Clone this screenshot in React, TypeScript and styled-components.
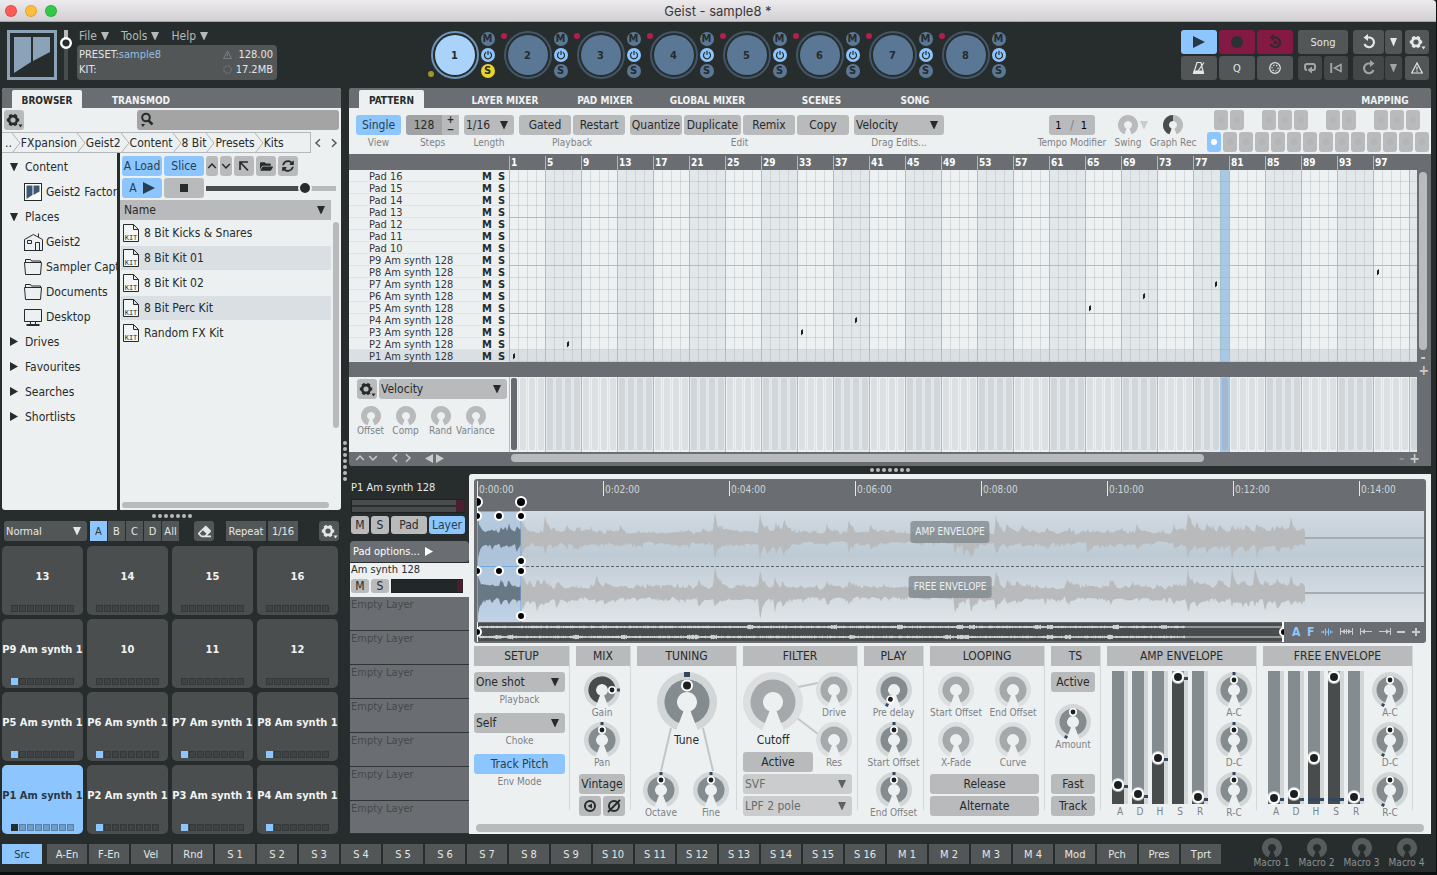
import React from "react";
import styled, { createGlobalStyle, css } from "styled-components";
import { FaEraser, FaFolderOpen, FaSyncAlt } from "react-icons/fa";

const c = {
  shell: "#272d2d",
  strip: "#6a6e72",
  panel: "#edf0f1",
  button: "#b9babb",
  blue: "#8dc6ff",
  darkButton: "#525656",
  ink: "#262b2c",
  muted: "#7c8184",
  maroon: "#841a43",
  ring: "#858c8f",
  tick: "#33485e",
};

const GlobalStyle = createGlobalStyle`
  * { box-sizing: border-box; }
  body { margin: 0; background: #0b0f0f; }
  body, button, input, select {
    font-family: "DejaVu Sans Condensed", "DejaVu Sans", sans-serif;
    font-size: 12px;
    color: ${c.ink};
  }
  button { border: 0; padding: 0; margin: 0; background: none; cursor: pointer; }
  ul { list-style: none; margin: 0; padding: 0; }
  svg { display: block; flex: none; }
`;

/* ---------- window shell ---------- */

const Window = styled.div`
  min-height: 100vh;
  display: flex;
  flex-direction: column;
  background: ${c.shell};
  border-right: 1px solid #0b0f0f;
  border-bottom: 3px solid #0b0f0f;
`;

const TitleBar = styled.header`
  position: relative;
  height: 22px;
  display: flex;
  align-items: center;
  justify-content: center;
  background: linear-gradient(#eceaec, #d2d0d2);
  border-bottom: 1px solid #a9a8a9;
  border-radius: 0 4px 0 0;
  font-family: Inter, Roboto, sans-serif;
  font-size: 13px;
  color: #3a383a;
`;

const Lights = styled.div`
  position: absolute;
  left: 5px;
  display: flex;
  gap: 8px;
`;

const Light = styled.button<{ $color: string }>`
  width: 12px;
  height: 12px;
  border-radius: 50%;
  background: ${(p) => p.$color};
  box-shadow: inset 0 0 0 1px rgba(0, 0, 0, 0.12);
`;

const Header = styled.div`
  height: 66px;
  padding: 8px 7px 0;
  display: grid;
  grid-template-columns: 1fr auto 1fr;
  align-items: start;
`;

const Brand = styled.div`
  display: flex;
`;

const MasterFader = styled.div`
  width: 18px;
  display: flex;
  justify-content: center;
`;

const MenuArea = styled.div`
  margin-left: 2px;
`;

const MenuRow = styled.nav`
  display: flex;
  gap: 12px;
  height: 15px;
  padding-left: 2px;
`;

const MenuButton = styled.button`
  display: flex;
  align-items: center;
  gap: 4px;
  height: 12px;
  color: #b5b9b9;
`;

const InfoBox = styled.div`
  width: 200px;
  height: 35px;
  padding: 2px 4px 2px 2px;
  border-radius: 4px;
  background: ${c.darkButton};
  color: #e2e5e5;
  font-size: 11px;
  display: grid;
  grid-template-columns: 1fr 10px 40px;
  grid-auto-rows: 15px;
  align-items: center;
  line-height: 15px;
  b {
    font-weight: normal;
    color: #92bfe6;
  }
  span:nth-child(3n) {
    text-align: right;
  }
`;

const Engines = styled.div`
  display: flex;
  gap: 9px;
`;

const Engine = styled.div`
  position: relative;
  display: flex;
  align-items: center;
  gap: 2px;
  height: 50px;
`;

const EngineRing = styled.button<{ $on?: boolean }>`
  width: 48px;
  height: 48px;
  border-radius: 50%;
  border: 2px solid ${(p) => (p.$on ? "#6c93ba" : "#42566a")};
  padding: 2px;
  background: ${(p) => (p.$on ? "#a9d3fb" : "#5a7896")} content-box;
  font-weight: bold;
  font-size: 11px;
  color: ${c.ink};
`;

const EngineDot = styled.span<{ $low?: boolean }>`
  position: absolute;
  left: -3px;
  top: ${(p) => (p.$low ? "41px" : "3px")};
  width: 6px;
  height: 6px;
  border-radius: 50%;
  background: ${(p) => (p.$low ? "#a39427" : "#b31d4f")};
`;

const EngineSide = styled.div`
  display: flex;
  flex-direction: column;
  gap: 2px;
`;

const MiniRound = styled.button<{ $tone: string }>`
  width: 14px;
  height: 14px;
  border-radius: 50%;
  background: ${(p) => p.$tone};
  font-weight: bold;
  font-size: 11px;
  line-height: 14px;
  display: flex;
  align-items: center;
  justify-content: center;
`;

const Transport = styled.div`
  justify-self: end;
  display: flex;
  flex-direction: column;
  gap: 2px;
`;

const TransportRow = styled.div`
  display: flex;
  gap: 5px;
`;

const Cluster = styled.div<{ $gap?: number; $pull?: boolean }>`
  display: flex;
  gap: ${(p) => p.$gap ?? 2}px;
  ${(p) => p.$pull && "margin-left: -2px;"}
`;

const DarkButton = styled.button<{ $w: number; $h?: number; $tone?: string; $dim?: boolean; $square?: boolean }>`
  width: ${(p) => p.$w}px;
  height: ${(p) => p.$h ?? 20}px;
  border-radius: ${(p) => (p.$square ? 0 : 3)}px;
  background: ${(p) => p.$tone ?? (p.$dim ? "#434747" : c.darkButton)};
  color: ${(p) => (p.$tone === c.blue ? "#263847" : p.$tone ? "#3b2431" : p.$dim ? "#a2a5a5" : "#e4e7e7")};
  font-size: 11px;
  display: flex;
  align-items: center;
  justify-content: center;
  white-space: nowrap;
`;

const Body = styled.main`
  flex: 1;
  display: flex;
  padding: 0 5px 0 2px;
`;

const LeftColumn = styled.div`
  flex: 0 0 339px;
  min-width: 0;
  display: flex;
  flex-direction: column;
`;

const RightColumn = styled.div`
  flex: 1;
  min-width: 0;
  display: flex;
  flex-direction: column;
`;

const Grip = styled.div<{ $vertical?: boolean; $size: number }>`
  flex: 0 0 ${(p) => p.$size}px;
  display: flex;
  flex-direction: ${(p) => (p.$vertical ? "column" : "row")};
  align-items: center;
  justify-content: center;
  gap: 2px;
  i {
    width: 4px;
    height: 4px;
    border-radius: 50%;
    background: #b9babb;
  }
`;

/* ---------- shared controls ---------- */

const TabStrip = styled.div`
  height: 20px;
  display: flex;
  align-items: flex-end;
  background: ${c.strip};
  border-radius: 3px 3px 0 0;
`;

const Tab = styled.button<{ $w: number; $active?: boolean; $end?: boolean }>`
  flex: none;
  width: ${(p) => p.$w}px;
  height: 18px;
  padding-top: 2px;
  border-radius: 2px 2px 0 0;
  background: ${(p) => (p.$active ? c.panel : "transparent")};
  color: ${(p) => (p.$active ? c.ink : "#f0f2f3")};
  font-weight: bold;
  font-size: 10px;
  white-space: nowrap;
  ${(p) => p.$end && "margin-left: auto;"}
`;

const LightButton = styled.button<{ $w?: number; $h?: number; $on?: boolean }>`
  flex: none;
  width: ${(p) => (p.$w ? p.$w + "px" : "100%")};
  height: ${(p) => p.$h ?? 20}px;
  border-radius: 3px;
  background: ${(p) => (p.$on ? c.blue : c.button)};
  color: ${(p) => (p.$on ? "#26404f" : c.ink)};
  display: flex;
  align-items: center;
  justify-content: center;
  gap: 6px;
  white-space: nowrap;
`;

const SelectBox = styled.div<{ $w?: number; $dim?: boolean; $dark?: boolean }>`
  position: relative;
  flex: none;
  width: ${(p) => (p.$w ? p.$w + "px" : "100%")};
  height: 20px;
  select {
    appearance: none;
    width: 100%;
    height: 20px;
    border: 0;
    border-radius: 3px;
    padding: 0 14px 0 2px;
    background: ${(p) => (p.$dark ? c.darkButton : p.$dim ? "#cbcccd" : c.button)};
    color: ${(p) => (p.$dark ? "#e4e7e7" : p.$dim ? "#676c6e" : c.ink)};
    font-size: ${(p) => (p.$dark ? 11 : 12)}px;
  }
  svg {
    position: absolute;
    right: 6px;
    top: 6px;
    pointer-events: none;
    color: ${(p) => (p.$dark ? "#e4e7e7" : p.$dim ? "#5c6163" : c.ink)};
  }
`;

function Down({ size = 8 }: { size?: number }) {
  return (
    <svg width={size} height={8} viewBox="0 0 8 8" preserveAspectRatio="none" aria-hidden="true">
      <path d="M0 0h8L4.300 8h-.6z" fill="currentColor" />
    </svg>
  );
}

function Picker(p: { label: string; value: string; w?: number; dim?: boolean; dark?: boolean }) {
  return (
    <SelectBox $w={p.w} $dim={p.dim} $dark={p.dark}>
      <select aria-label={p.label} defaultValue={p.value}>
        <option>{p.value}</option>
      </select>
      <Down />
    </SelectBox>
  );
}

const ScrollThumb = styled.div<{ $w?: string; $h?: string }>`
  width: ${(p) => p.$w ?? "6px"};
  height: ${(p) => p.$h ?? "6px"};
  border-radius: 4px;
  background: ${c.button};
`;

function Gear({ size = 20 }: { size?: number }) {
  return (
    <svg width={size} height={size} viewBox="0 0 20 20" aria-hidden="true">
      <g stroke="currentColor" fill="none">
        <circle cx="9" cy="10" r="3.900" strokeWidth="2.600" />
        {[0, 60, 120].map((a) => (
          <g key={a} transform={`rotate(${a} 9 10)`} strokeWidth="3.200">
            <path d="M2.800 10h2M13.200 10h2" />
          </g>
        ))}
      </g>
      <path d="M14.500 14.500h4l-2 3z" fill="currentColor" />
    </svg>
  );
}

/* ---------- rotary knob ---------- */

const rad = (deg: number) => ((deg - 90) * Math.PI) / 180;
const px = (r: number, deg: number) => `${(r * Math.cos(rad(deg))).toFixed(2)} ${(r * Math.sin(rad(deg))).toFixed(2)}`;

function sector(from: number, to: number, outer: number, inner: number) {
  const big = to - from > 180 ? 1 : 0;
  return `M${px(outer, from)}A${outer} ${outer} 0 ${big} 1 ${px(outer, to)}L${px(inner, to)}A${inner} ${inner} 0 ${big} 0 ${px(inner, from)}Z`;
}

const KnobLabel = styled.label`
  position: relative;
  display: flex;
  flex-direction: column;
  align-items: center;
  input {
    position: absolute;
    inset: 0;
    width: 100%;
    height: 100%;
    margin: 0;
    opacity: 0;
  }
`;

const KnobText = styled.span<{ $big?: boolean; $pull: number; $dark?: boolean }>`
  margin-top: ${(p) => -p.$pull}px;
  height: ${(p) => (p.$big ? 16 : 14)}px;
  line-height: ${(p) => (p.$big ? 16 : 14)}px;
  font-size: ${(p) => (p.$big ? 12 : 10)}px;
  color: ${(p) => (p.$big ? c.ink : p.$dark ? "#8d9292" : c.muted)};
  white-space: nowrap;
`;

type KnobProps = {
  label: string;
  kind?: "small" | "big" | "tiny";
  dot?: number;
  tick?: number;
  fill?: number;
  off?: boolean;
  dark?: boolean;
  roomy?: boolean;
};

function Knob({ label, kind = "small", dot, tick, fill, off, dark, roomy }: KnobProps) {
  const big = kind === "big";
  const tiny = kind === "tiny";
  const half = big ? 30 : tiny ? 10 : 18;
  const outer = big ? 22.5 : tiny ? 10 : 13.5;
  const inner = big ? 10 : tiny ? 4 : 6;
  const ring = dark ? "#565b5b" : tiny ? "#b9babb" : off ? "#a5a9ac" : c.ring;
  return (
    <KnobLabel>
      <svg width={half * 2} height={half * 2} viewBox={`${-half} ${-half} ${half * 2} ${half * 2}`} aria-hidden="true">
        {!tiny && <path d={sector(-159, 159, half, inner)} fill={off ? "#dcdee0" : "#d2d6d7"} />}
        <path d={sector(-159, 159, outer, inner)} fill={ring} />
        {fill !== undefined && <path d={sector(-159, fill, outer, inner)} fill="#484c4d" />}
        {tick !== undefined && (
          <rect x={big ? -3 : -1.5} y={-half} width={big ? 6 : 3} height={big ? 5 : 3} fill={c.tick} transform={`rotate(${tick})`} />
        )}
        {dot !== undefined && (
          <g transform={`rotate(${dot})`}>
            <circle cy={big ? -16.5 : -10} r={big ? 6 : 4} fill="#fff" />
            <circle cy={big ? -16.5 : -10} r={big ? 4 : 2.4} fill="#1b1f20" />
          </g>
        )}
      </svg>
      <input type="range" aria-label={label} />
      <KnobText $big={big} $pull={roomy ? -1 : big ? 0 : 2} $dark={dark}>
        {label}
      </KnobText>
    </KnobLabel>
  );
}

/* ---------- browser ---------- */

const BrowserPanel = styled.section`
  flex: 1;
  display: flex;
  flex-direction: column;
  background: ${c.panel};
  border-radius: 3px;
`;

const BrowserTabs = styled(TabStrip)`
  padding-left: 10px;
`;

const SearchRow = styled.div`
  height: 24px;
  padding: 2px;
  display: flex;
  justify-content: space-between;
`;

const SearchField = styled.label`
  position: relative;
  width: 202px;
  svg {
    position: absolute;
    left: 2px;
    top: 2px;
  }
  input {
    width: 100%;
    height: 20px;
    border: 0;
    border-radius: 3px;
    padding: 0 4px 0 22px;
    background: #a4a4a5;
  }
`;

const CrumbRow = styled.div`
  display: flex;
  height: 21px;
`;

const Crumbs = styled.nav`
  width: 309px;
  overflow: hidden;
  border: 1px solid #b5b8ba;
  border-left: 0;
  display: flex;
  align-items: center;
  padding-left: 3px;
  button {
    white-space: nowrap;
  }
`;

const Pager = styled.div`
  flex: 1;
  display: flex;
  align-items: center;
  justify-content: center;
  gap: 6px;
  color: #55595b;
`;

const BrowserSplit = styled.div`
  flex: 1;
  display: grid;
  grid-template-columns: 115px 3px 1fr;
`;

const TreePane = styled.ul`
  overflow: hidden;
  padding-top: 1px;
`;

const TreeRow = styled.li<{ $child?: boolean }>`
  height: 25px;
  display: flex;
  align-items: center;
  gap: ${(p) => (p.$child ? 3 : 7)}px;
  padding-left: ${(p) => (p.$child ? 21 : 8)}px;
  white-space: nowrap;
`;

const Divider = styled.div`
  background: ${c.shell};
`;

const ListPane = styled.div`
  display: flex;
  flex-direction: column;
  min-width: 0;
`;

const ButtonLine = styled.div`
  display: flex;
  align-items: center;
  gap: 2px;
  padding: 2px 2px 0;
  &:first-child {
    padding-top: 3px;
  }
`;

const PreviewRange = styled.input`
  appearance: none;
  width: 130px;
  height: 12px;
  margin: 0;
  background: linear-gradient(90deg, #484c4d 76%, #b9babb 76%) center / 100% 5px no-repeat;
  &::-webkit-slider-thumb {
    appearance: none;
    width: 14px;
    height: 14px;
    border-radius: 50%;
    background: ${c.ink};
    border: 2px solid ${c.panel};
  }
`;

const FileArea = styled.div`
  flex: 1;
  display: grid;
  grid-template-columns: 211px 10px;
  padding-top: 2px;
`;

const NameHeader = styled.button`
  width: 100%;
  height: 20px;
  padding: 0 6px 0 4px;
  background: ${c.button};
  display: flex;
  align-items: center;
  justify-content: space-between;
`;

const FileRow = styled.li<{ $alt?: boolean }>`
  height: 24px;
  margin: 1px 0 0 1px;
  padding-left: 2px;
  display: flex;
  align-items: center;
  gap: 5px;
  background: ${(p) => (p.$alt ? "#dadfe4" : "transparent")};
`;

const VerticalGutter = styled.div`
  padding: 22px 0 0 2px;
`;

const HorizontalGutter = styled.div`
  height: 8px;
  padding-left: 2px;
`;

function Chevron({ dir }: { dir: "up" | "down" | "left" | "right" }) {
  const turn = { up: 0, right: 90, down: 180, left: 270 }[dir];
  return (
    <svg width="10" height="10" viewBox="-5 -5 10 10" aria-hidden="true">
      <path d="M-3.800 2L0 -2L3.800 2" transform={`rotate(${turn})`} fill="none" stroke="currentColor" strokeWidth="1.500" />
    </svg>
  );
}

function Triangle({ dir, w = 8, h = 9 }: { dir: "left" | "right"; w?: number; h?: number }) {
  return (
    <svg width={w} height={h} viewBox="0 0 10 10" preserveAspectRatio="none" aria-hidden="true">
      <path d={dir === "right" ? "M0 0L10 5L0 10z" : "M10 0L0 5L10 10z"} fill="currentColor" />
    </svg>
  );
}

function PlaceIcon({ kind }: { kind: string }) {
  return (
    <svg width="20" height="20" viewBox="0 0 20 20" fill="none" stroke="#262b2c" strokeWidth="1" aria-hidden="true">
      {kind === "library" && (
        <>
          <rect x="1.500" y="1.500" width="17" height="17" fill="#fff" />
          <path d="M3.500 3.500h6v9.500l-6 4zM10.500 3.500h6v6l-6 3.500z" fill="#3f5872" stroke="none" />
        </>
      )}
      {kind === "home" && (
        <path d="M1.500 19V7.500L10.500 2.500L19.500 7.500V18.500H1.500M15.500 5V1.500M4.500 8.500h4v3h-4zM12.500 18.500v-8h4v8" />
      )}
      {kind === "folder" && <path d="M2.500 17.500L1.500 5.500h17L17.500 17.500zM2.500 5.500V2.500h5l1 1.500h9v1.500" />}
      {kind === "desktop" && (
        <>
          <path d="M1.500 2.500h17v12h-17zM7.500 14.500v3M12.500 14.500v3" />
          <path d="M3.500 18h13" strokeWidth="2" />
        </>
      )}
    </svg>
  );
}

function KitIcon() {
  return (
    <svg width="16" height="18" viewBox="0 0 16 18" aria-hidden="true">
      <path d="M.5 .5h10l5 5v12h-15zM10.500 .5v5h5" fill="#f4f6f6" stroke="#262b2c" />
      <text x="8" y="16" textAnchor="middle" fontSize="7" fontFamily="Liberation Mono, monospace" fill="#262b2c">
        KIT
      </text>
    </svg>
  );
}

const tree: { label: string; icon?: string; open?: boolean }[] = [
  { label: "Content", open: true },
  { label: "Geist2 Factory", icon: "library" },
  { label: "Places", open: true },
  { label: "Geist2", icon: "home" },
  { label: "Sampler Captures", icon: "folder" },
  { label: "Documents", icon: "folder" },
  { label: "Desktop", icon: "desktop" },
  { label: "Drives" },
  { label: "Favourites" },
  { label: "Searches" },
  { label: "Shortlists" },
];

function Browser() {
  return (
    <BrowserPanel>
      <BrowserTabs>
        <Tab $w={70} $active>BROWSER</Tab>
        <Tab $w={118}>TRANSMOD</Tab>
      </BrowserTabs>
      <SearchRow>
        <LightButton $w={20} aria-label="Browser options"><Gear /></LightButton>
        <SearchField>
          <svg width="16" height="16" viewBox="0 0 16 16" fill="none" stroke={c.ink} aria-hidden="true">
            <circle cx="7" cy="5.500" r="3.800" strokeWidth="2" />
            <path d="M9.500 8.500L13.500 12.500" strokeWidth="2.500" />
            <path d="M2 12h4l-2 3z" fill={c.ink} stroke="none" />
          </svg>
          <input aria-label="Search" />
        </SearchField>
      </SearchRow>
      <CrumbRow>
        <Crumbs>
          {["..", "FXpansion", "Geist2", "Content", "8 Bit", "Presets", "Kits"].map((t, i) => (
            <React.Fragment key={t}>
              {i > 0 && (
                <svg width="9" height="20" viewBox="0 0 9 20" aria-hidden="true">
                  <path d="M0 0L8 10L0 20" fill="none" stroke="#b0b3b5" />
                </svg>
              )}
              <button>{t}</button>
            </React.Fragment>
          ))}
        </Crumbs>
        <Pager><Chevron dir="left" /><Chevron dir="right" /></Pager>
      </CrumbRow>
      <BrowserSplit>
        <TreePane>
          {tree.map((n) => (
            <TreeRow key={n.label} $child={!!n.icon}>
              {n.icon ? <PlaceIcon kind={n.icon} /> : n.open ? <Down /> : <Triangle dir="right" />}
              {n.label}
            </TreeRow>
          ))}
        </TreePane>
        <Divider />
        <ListPane>
          <ButtonLine>
            <LightButton $w={40} $on>A Load</LightButton>
            <LightButton $w={40} $on>Slice</LightButton>
            <LightButton $w={12} aria-label="Previous"><Chevron dir="up" /></LightButton>
            <LightButton $w={12} aria-label="Next"><Chevron dir="down" /></LightButton>
            <LightButton $w={20} aria-label="Parent folder">
              <svg width="12" height="12" viewBox="0 0 12 12" fill="none" stroke={c.ink} strokeWidth="1.700" aria-hidden="true">
                <path d="M2 10V2H10M2 2L10 10.500" />
              </svg>
            </LightButton>
            <LightButton $w={20} aria-label="Open folder"><FaFolderOpen size={13} /></LightButton>
            <LightButton $w={20} aria-label="Refresh"><FaSyncAlt size={12} /></LightButton>
          </ButtonLine>
          <ButtonLine>
            <LightButton $w={40} $on>A <Triangle dir="right" w={12} h={12} /></LightButton>
            <LightButton $w={40} aria-label="Stop">
              <svg width="8" height="8" aria-hidden="true"><rect width="8" height="8" fill={c.ink} /></svg>
            </LightButton>
            <PreviewRange type="range" defaultValue={79} aria-label="Preview volume" />
          </ButtonLine>
          <FileArea>
            <div>
              <NameHeader>Name <Down /></NameHeader>
              <ul>
                {["8 Bit Kicks & Snares", "8 Bit Kit 01", "8 Bit Kit 02", "8 Bit Perc Kit", "Random FX Kit"].map((f, i) => (
                  <FileRow key={f} $alt={i % 2 === 1}><KitIcon />{f}</FileRow>
                ))}
              </ul>
            </div>
            <VerticalGutter><ScrollThumb $h="206px" /></VerticalGutter>
          </FileArea>
          <HorizontalGutter><ScrollThumb $w="207px" /></HorizontalGutter>
        </ListPane>
      </BrowserSplit>
    </BrowserPanel>
  );
}

/* ---------- pads ---------- */

const PadToolbar = styled.div`
  display: flex;
  gap: 3px;
  padding: 0 2px;
  margin-bottom: 5px;
`;

const Push = styled.span<{ $w: number }>`
  flex: 0 0 ${(p) => p.$w}px;
`;

const PadGrid = styled.div`
  display: grid;
  grid-template-columns: repeat(4, 81px);
  grid-auto-rows: 69px;
  gap: 4px;
`;

const Pad = styled.button<{ $on?: boolean }>`
  overflow: hidden;
  border-radius: 5px;
  background: ${(p) => (p.$on ? c.blue : "#4a4e4e")};
  color: ${(p) => (p.$on ? "#263847" : "#f1f3f3")};
  font-weight: bold;
  font-size: 11px;
  display: flex;
  flex-direction: column;
  justify-content: flex-end;
  align-items: center;
  gap: 20px;
  padding: 0 0 3px;
  white-space: nowrap;
`;

const Leds = styled.span<{ $on?: boolean; $used?: boolean }>`
  display: flex;
  gap: 1px;
  i {
    width: 7px;
    height: 7px;
    border: 1px solid ${(p) => (p.$on ? "#5a80a6" : "#343838")};
    background: ${(p) => (p.$on ? "#6f9cc8" : "#3f4343")};
  }
  i:first-child {
    ${(p) =>
      p.$used &&
      css`
        border-color: ${p.$on ? c.ink : c.blue};
        background: ${p.$on ? c.ink : c.blue};
      `}
  }
`;

const PadText = styled.span`
  line-height: 16px;
`;

const padNames = [
  "13", "14", "15", "16",
  "P9 Am synth 1", "10", "11", "12",
  "P5 Am synth 1", "P6 Am synth 1", "P7 Am synth 1", "P8 Am synth 1",
  "P1 Am synth 1", "P2 Am synth 1", "P3 Am synth 1", "P4 Am synth 1",
];

function Pads() {
  return (
    <>
      <PadToolbar>
        <Picker label="Pad mode" value="Normal" w={83} dark />
        <Cluster $gap={1}>
          {["A", "B", "C", "D", "All"].map((b, i) => (
            <DarkButton key={b} $w={17} $square $tone={i === 0 ? c.blue : undefined}>{b}</DarkButton>
          ))}
        </Cluster>
        <Push $w={9} />
        <DarkButton $w={20} aria-label="Erase"><FaEraser size={13} /></DarkButton>
        <Push $w={6} />
        <Cluster>
          <DarkButton $w={40} $square>Repeat</DarkButton>
          <DarkButton $w={30} $square>1/16</DarkButton>
        </Cluster>
        <Push $w={15} />
        <DarkButton $w={20} aria-label="Pad options"><Gear /></DarkButton>
      </PadToolbar>
      <PadGrid>
        {padNames.map((n) => {
          const on = n.startsWith("P1 ");
          return (
            <Pad key={n} $on={on}>
              <PadText>{n}</PadText>
              <Leds $on={on} $used={n.startsWith("P")}>
                {Array.from({ length: 8 }, (_, i) => <i key={i} />)}
              </Leds>
            </Pad>
          );
        })}
      </PadGrid>
    </>
  );
}

/* ---------- pattern ---------- */

const PatternPanel = styled.section`
  background: ${c.strip};
  border-radius: 3px 3px 0 3px;
`;

const PatternTabs = styled(TabStrip)`
  padding: 0 21px 0 10px;
`;

const PatternTools = styled.div`
  height: 46px;
  display: flex;
  padding: 7px 2px 0 7px;
  gap: 5px;
  background: ${c.panel};
`;

const ToolGroup = styled.div<{ $w?: number; $end?: boolean }>`
  position: relative;
  flex: none;
  width: ${(p) => (p.$w ? p.$w + "px" : "auto")};
  display: flex;
  flex-direction: column;
  align-items: center;
  ${(p) => p.$end && "margin-left: auto;"}
`;

const Caption = styled.span`
  font-size: 10px;
  line-height: 16px;
  color: ${c.muted};
  white-space: nowrap;
`;

const StepsField = styled.div`
  display: flex;
  input {
    width: 36px;
    height: 20px;
    border: 0;
    border-radius: 3px 0 0 3px;
    background: #a0a2a3;
    text-align: center;
  }
`;

const Spinner = styled.div`
  width: 17px;
  display: flex;
  flex-direction: column;
  background: ${c.button};
  button {
    height: 10px;
    line-height: 10px;
    font-size: 10px;
    font-weight: bold;
  }
`;

const TempoField = styled.div`
  width: 46px;
  height: 20px;
  border-radius: 3px;
  background: ${c.button};
  display: flex;
  align-items: center;
  justify-content: center;
  gap: 7px;
  color: ${c.muted};
  input {
    width: 8px;
    border: 0;
    padding: 0;
    background: none;
    font-size: 11px;
    color: #000;
  }
`;

const SwingArrow = styled.span`
  position: absolute;
  right: -3px;
  top: 6px;
  color: #c9cbcc;
`;

const Keyboard = styled.div`
  margin: -5px 0 0 6px;
  display: flex;
  flex-direction: column;
  gap: 2px;
`;

const KeyRow = styled.div<{ $black?: boolean }>`
  display: flex;
  gap: 2px;
  padding-left: ${(p) => (p.$black ? 7 : 0)}px;
`;

const PianoKey = styled.button<{ $on?: boolean; $skip?: boolean }>`
  width: 14px;
  height: 20px;
  border-radius: 3px;
  background: ${(p) => (p.$on ? c.blue : c.button)};
  display: flex;
  align-items: center;
  justify-content: center;
  ${(p) => p.$skip && "margin-left: 16px;"}
  &::after {
    content: "";
    width: 6px;
    height: 6px;
    border-radius: 50%;
    background: ${(p) => (p.$on ? "#fff" : "#b3b4b5")};
  }
`;

const Ruler = styled.div`
  height: 16px;
  display: flex;
  padding-left: 160px;
  overflow: hidden;
`;

const RulerMark = styled.span`
  flex: 0 0 36px;
  height: 14px;
  margin-top: 2px;
  padding-left: 1px;
  border-left: 1px solid #b5b8ba;
  color: #fff;
  font-weight: bold;
  font-size: 10px;
  line-height: 14px;
`;

const GridRow = styled.div`
  display: grid;
  grid-template-columns: 160px 1fr 14px;
`;

const TrackNames = styled.ul`
  background: ${c.panel};
`;

const TrackRow = styled.li<{ $sel?: boolean }>`
  height: 12px;
  display: grid;
  grid-template-columns: 111px 14px 15px;
  grid-template-rows: 14px;
  padding-left: 20px;
  font-size: 11px;
  line-height: 14px;
  white-space: nowrap;
  color: #33383a;
  background: ${(p) => (p.$sel ? "#dadfe3" : "transparent")};
  box-shadow: inset 0 -1px #dfe3e5;
  button {
    font-size: 11px;
    line-height: 14px;
    font-weight: bold;
  }
`;

const Canvas = styled.svg`
  width: 100%;
  min-width: 0;
`;

const GridScroll = styled.div`
  display: flex;
  flex-direction: column;
  align-items: center;
  padding: 2px 2px 0 0;
  gap: 3px;
`;

const ZoomKey = styled.button<{ $dim?: boolean }>`
  height: 9px;
  font-size: 14px;
  font-weight: bold;
  line-height: 9px;
  color: ${(p) => (p.$dim ? "#8b8f92" : "#c9cbcc")};
`;

const GapRow = styled.div`
  height: 15px;
  display: flex;
  justify-content: flex-end;
  padding: 4px 2px 0 0;
`;

const VelocityControls = styled.div`
  height: 75px;
  background: ${c.panel};
  padding: 2px 2px 0 8px;
`;

const VelocityTop = styled.div`
  display: flex;
  gap: 2px;
  margin-bottom: 7px;
`;

const VelocityKnobs = styled.div`
  display: grid;
  grid-template-columns: repeat(4, 35px);
  margin-left: -4px;
`;

const PatternFooter = styled.div`
  height: 14px;
  display: grid;
  grid-template-columns: 162px 1fr 32px;
  color: #c9cbcc;
`;

const FooterNav = styled.div`
  display: flex;
  align-items: center;
  height: 12px;
  padding-left: 6px;
  gap: 3px;
`;

const FooterScroll = styled.div`
  padding-top: 2px;
`;

const FooterZoom = styled.div`
  display: flex;
  gap: 5px;
  align-items: center;
  height: 12px;
`;

const notes = [
  [0, 15], [6, 14], [32, 13], [38, 12], [64, 11], [70, 10], [78, 9], [96, 8],
];

const trackNames = [
  ...[16, 15, 14, 13, 12, 11, 10].map((n) => `Pad ${n}`),
  ...[9, 8, 7, 6, 5, 4, 3, 2, 1].map((n) => `P${n} Am synth 128`),
];

function NoteGrid() {
  return (
    <Canvas height={192} shapeRendering="crispEdges" role="img" aria-label="Pattern grid">
      <defs>
        <pattern id="groups" width="72" height="192" patternUnits="userSpaceOnUse">
          <rect width="72" height="192" fill="#edf1f1" />
          <rect x="36" width="36" height="192" fill="#e2e7ea" />
          <rect y="180" width="72" height="12" fill="#dadfe3" />
        </pattern>
        <pattern id="cells" width="9" height="12" patternUnits="userSpaceOnUse">
          <rect width="1" height="12" fill="#9aa2a6" opacity=".3" />
          <rect y="11" width="9" height="1" fill="#9aa2a6" opacity=".3" />
        </pattern>
        <pattern id="beats" width="36" height="48" patternUnits="userSpaceOnUse">
          <rect width="1" height="48" fill="#b6babc" />
          <rect y="47" width="36" height="1" fill="#b6babc" />
        </pattern>
      </defs>
      <rect width="100%" height="192" fill="url(#groups)" />
      <rect x="711" width="9" height="192" fill="#a9c8e2" />
      <rect width="100%" height="192" fill="url(#cells)" />
      <rect width="100%" height="191" fill="url(#beats)" />
      <g shapeRendering="auto" fill="#1b1f20">
        {notes.map(([s, r]) => (
          <path key={s} d="M4 4.500L6 3V7.500L4 9.500z" transform={`translate(${s * 9} ${r * 12})`} />
        ))}
      </g>
    </Canvas>
  );
}

function VelocityGraph() {
  return (
    <Canvas height={75} role="img" aria-label="Velocity graph">
      <defs>
        <pattern id="lanes" width="72" height="75" patternUnits="userSpaceOnUse">
          <rect width="72" height="75" fill="#edf1f1" />
          <rect x="36" width="36" height="75" fill="#e2e7ea" />
          {Array.from({ length: 8 }, (_, i) => (
            <g key={i}>
              <rect x={i * 9} width="1" height="75" fill={i % 4 ? "#dfe3e5" : "#b6babc"} />
              <rect x={i * 9 + 2} y="1" width="6" height="72" rx="2" fill={i < 4 ? "#dbdfe2" : "#d1d6da"} />
            </g>
          ))}
        </pattern>
      </defs>
      <rect width="100%" height="75" fill="url(#lanes)" />
      <rect x="2" y="1" width="6" height="72" rx="2" fill="#676b6f" />
      <rect x="711" width="9" height="75" fill="#a9c8e2" />
      <rect x="713" y="1" width="6" height="72" rx="2" fill="#a1b8d0" />
    </Canvas>
  );
}

function Pattern() {
  return (
    <PatternPanel>
      <PatternTabs>
        <Tab $w={65} $active>PATTERN</Tab>
        <Push $w={10} />
        <Tab $w={142}>LAYER MIXER</Tab>
        <Tab $w={58}>PAD MIXER</Tab>
        <Tab $w={147}>GLOBAL MIXER</Tab>
        <Tab $w={81}>SCENES</Tab>
        <Tab $w={106}>SONG</Tab>
        <Tab $w={50} $end>MAPPING</Tab>
      </PatternTabs>
      <PatternTools>
        <ToolGroup><LightButton $w={45} $on>Single</LightButton><Caption>View</Caption></ToolGroup>
        <ToolGroup>
          <StepsField>
            <input aria-label="Steps" defaultValue="128" />
            <Spinner><button>+</button><button>−</button></Spinner>
          </StepsField>
          <Caption>Steps</Caption>
        </ToolGroup>
        <ToolGroup><Picker label="Length" value="1/16" w={50} /><Caption>Length</Caption></ToolGroup>
        <ToolGroup>
          <Cluster><LightButton $w={52}>Gated</LightButton><LightButton $w={52}>Restart</LightButton></Cluster>
          <Caption>Playback</Caption>
        </ToolGroup>
        <ToolGroup>
          <Cluster>
            <LightButton $w={52}>Quantize</LightButton>
            <LightButton $w={57}>Duplicate</LightButton>
            <LightButton $w={52}>Remix</LightButton>
            <LightButton $w={52}>Copy</LightButton>
          </Cluster>
          <Caption>Edit</Caption>
        </ToolGroup>
        <ToolGroup><Picker label="Drag edits" value="Velocity" w={90} /><Caption>Drag Edits...</Caption></ToolGroup>
        <ToolGroup $end $w={68}>
          <TempoField>
            <input aria-label="Tempo numerator" defaultValue="1" />/<input aria-label="Tempo denominator" defaultValue="1" />
          </TempoField>
          <Caption>Tempo Modifier</Caption>
        </ToolGroup>
        <ToolGroup $w={34}>
          <Knob label="Swing" kind="tiny" roomy />
          <SwingArrow><Down /></SwingArrow>
        </ToolGroup>
        <ToolGroup $w={46}><Knob label="Graph Rec" kind="tiny" fill={0} roomy /></ToolGroup>
        <Keyboard>
          <KeyRow $black>
            {Array.from({ length: 10 }, (_, i) => (
              <PianoKey key={i} $skip={i === 2 || i === 5 || i === 7} aria-label={`Black key ${i + 1}`} />
            ))}
          </KeyRow>
          <KeyRow>
            {Array.from({ length: 14 }, (_, i) => <PianoKey key={i} $on={i === 0} aria-label={`White key ${i + 1}`} />)}
          </KeyRow>
        </Keyboard>
      </PatternTools>
      <Ruler>
        {Array.from({ length: 25 }, (_, i) => <RulerMark key={i}>{i * 4 + 1}</RulerMark>)}
      </Ruler>
      <GridRow>
        <TrackNames>
          {trackNames.map((t, i) => (
            <TrackRow key={t} $sel={i === 15}>{t}<button>M</button><button>S</button></TrackRow>
          ))}
        </TrackNames>
        <NoteGrid />
        <GridScroll>
          <ScrollThumb $w="8px" $h="178px" />
          <ZoomKey>-</ZoomKey>
        </GridScroll>
      </GridRow>
      <GapRow><ZoomKey>+</ZoomKey></GapRow>
      <GridRow>
        <VelocityControls>
          <VelocityTop>
            <LightButton $w={20} aria-label="Graph options"><Gear /></LightButton>
            <Picker label="Graph" value="Velocity" w={128} />
          </VelocityTop>
          <VelocityKnobs>
            {["Offset", "Comp", "Rand", "Variance"].map((k) => <Knob key={k} label={k} kind="tiny" />)}
          </VelocityKnobs>
        </VelocityControls>
        <VelocityGraph />
      </GridRow>
      <PatternFooter>
        <FooterNav>
          <Chevron dir="up" /><Chevron dir="down" />
          <Push $w={6} />
          <Chevron dir="left" /><Chevron dir="right" />
          <Push $w={6} />
          <Triangle dir="left" /><Triangle dir="right" />
        </FooterNav>
        <FooterScroll><ScrollThumb $w="78%" $h="8px" /></FooterScroll>
        <FooterZoom><ZoomKey $dim>-</ZoomKey><ZoomKey>+</ZoomKey></FooterZoom>
      </PatternFooter>
    </PatternPanel>
  );
}

/* ---------- layer column ---------- */

const Lower = styled.section`
  flex: 1;
  display: grid;
  grid-template-columns: 120px minmax(0, 1fr);
`;

const LayerColumn = styled.div`
  display: flex;
  flex-direction: column;
`;

const PadInfo = styled.div`
  height: 67px;
  padding: 6px 4px 0 2px;
  display: flex;
  flex-direction: column;
  gap: 3px;
  color: #e8eaea;
  font-size: 11px;
  line-height: 16px;
`;

const Meter = styled.div<{ $h: number; $w?: number; $fill: string }>`
  flex: none;
  width: ${(p) => (p.$w ? p.$w + "px" : "100%")};
  height: ${(p) => p.$h}px;
  border: 1px solid #1c2122;
  border-right-color: #33242a;
  background: linear-gradient(90deg, transparent 93%, #4a2030 93%), ${(p) => p.$fill};
`;

const SmallButtons = styled.div`
  display: flex;
  gap: 2px;
`;

const PadOptions = styled.button`
  height: 21px;
  margin-left: 1px;
  padding-left: 3px;
  border-radius: 4px 4px 3px 0;
  background: ${c.strip};
  color: #fff;
  font-size: 11px;
  display: flex;
  align-items: center;
  gap: 5px;
`;

const ActiveLayer = styled.div`
  height: 34px;
  margin: 1px 0 0 1px;
  padding: 0 0 0 1px;
  display: flex;
  flex-direction: column;
  gap: 2px;
  background: ${c.panel};
  font-size: 11px;
  line-height: 14px;
`;

const EmptyLayer = styled.div`
  flex: 1 0 34px;
  margin-left: 1px;
  padding: 1px 0 0 1px;
  border-bottom: 1px solid #2f3435;
  background: ${c.strip};
  color: #44494b;
  font-size: 11px;
  line-height: 14px;
  &:last-child {
    flex-basis: 33px;
  }
`;

/* ---------- waveform ---------- */

const EditorPanel = styled.div`
  display: flex;
  flex-direction: column;
  min-width: 0;
  padding: 5px 5px 2px;
  background: ${c.panel};
  border-radius: 3px 0 0 0;
`;

const WavePanel = styled.div`
  position: relative;
  height: 164px;
  padding: 0 2px 0 3px;
  border-radius: 3px;
  background: ${c.strip};
`;

const TimeRuler = styled.div`
  height: 17px;
  padding-top: 2px;
  display: flex;
  overflow: hidden;
`;

const TimeMark = styled.span`
  flex: 0 0 126px;
  height: 15px;
  padding: 2px 0 0 1px;
  border-left: 1px solid #e6e8e9;
  color: #d3d6d8;
  font-size: 10px;
  line-height: 14px;
`;

const WaveTag = styled.span<{ $row: number }>`
  position: absolute;
  left: 50%;
  top: ${(p) => (p.$row ? 97 : 42)}px;
  height: 22px;
  padding: 0 5px;
  transform: translateX(-50%);
  border-radius: 3px;
  background: rgba(126, 133, 139, 0.75);
  color: #eef0f1;
  font-size: 10px;
  line-height: 22px;
  white-space: nowrap;
`;

const Overview = styled.div`
  height: 21px;
  display: grid;
  grid-template-columns: minmax(0, 1fr) 140px;
`;

const OverviewTools = styled.div`
  display: flex;
  align-items: center;
  padding: 0 4px 2px 8px;
  justify-content: space-between;
  color: #c9cbcc;
  b {
    font-size: 12px;
    color: ${c.blue};
  }
`;

const noise = (n: number) => {
  const v = Math.sin(n * 12.9898 + 4.137) * 43758.5453;
  return v - Math.floor(v);
};

/* noise joined by straight lines between whole numbers */
const smooth = (x: number) => {
  const i = Math.floor(x);
  return noise(i) + (noise(i + 1) - noise(i)) * (x - i);
};

/* [x, height above, height below] of the loud transients */
const hits: number[][][] = [
  [[1, 13, 20], [15, 3, 6], [24, 8, 6], [32, 8, 4], [40, 6, 6], [46, 12, 9], [68, 20, 14], [76, 5, 6], [90, 8, 5], [100, 7, 4], [144, 6, 5], [238, 24, 18], [283, 22, 22], [290, 6, 9], [299, 12, 7], [307, 10, 10], [350, 8, 4], [372, 18, 12], [394, 9, 7], [478, 5, 15], [487, 4, 17], [494, 4, 14], [519, 20, 12], [530, 9, 7], [545, 6, 4], [570, 7, 4], [611, 5, 10], [630, 5, 5], [660, 12, 6], [697, 6, 6], [711, 21, 15], [720, 8, 8], [730, 8, 9], [742, 7, 6], [755, 9, 15], [769, 7, 7], [780, 8, 14], [800, 7, 6], [814, 15, 6]],
  [[1, 14, 20], [15, 3, 5], [24, 8, 6], [32, 7, 5], [46, 15, 12], [53, 6, 5], [60, 8, 13], [67, 7, 6], [80, 6, 12], [120, 13, 5], [128, 7, 6], [160, 4, 6], [222, 10, 10], [238, 24, 8], [283, 20, 22], [298, 10, 14], [306, 8, 8], [350, 8, 9], [372, 7, 6], [478, 5, 18], [494, 4, 17], [519, 20, 13], [530, 8, 5], [540, 8, 7], [590, 10, 5], [634, 7, 8], [697, 6, 6], [711, 21, 16], [720, 7, 6], [742, 6, 5], [755, 24, 8], [766, 6, 7], [778, 21, 8], [788, 6, 12], [800, 7, 11], [814, 9, 6]],
];

function wavePath(lane: number, mid: number, from: number, to: number) {
  const at = (x: number, side: number) => {
    const seed = lane * 131 + side * 37;
    let a = 3 + 4 * smooth(x / 4 + seed) + 3 * noise(x + seed) * smooth(x / 11 + seed + 500);
    if (noise(x * 7 + seed) > 0.9) a += 3;
    if (x > 330 && x < 470) a *= 0.85;
    if (x > 700) a += 1;
    if (x < 48) a = a * 0.8 + 1;
    for (const h of hits[lane]) {
      const d = x - h[0];
      if (d >= -1) a += h[side] * (d < 0 ? 0.4 : 0.68 * Math.exp(-d / 2.2) + 0.12 * Math.exp(-d / 12));
    }
    return Math.min(a, 29);
  };
  let top = `M${from} ${mid}`;
  let bottom = "";
  for (let x = from; x <= to; x += 1) {
    top += `L${x} ${(mid - at(x, 1)).toFixed(1)}`;
    bottom = `L${x} ${(mid + at(x, 2)).toFixed(1)}` + bottom;
  }
  return `${top}${bottom}Z`;
}

function overviewPath(mid: number, seed: number) {
  let d = "";
  for (let x = 2; x < 708; x += 1) {
    const h = 0.5 + noise(x + seed) * 0.8 + (noise(Math.floor(x / 6) + seed) > 0.9 ? 1 : 0);
    d += `M${x + 0.5} ${(mid - h).toFixed(1)}V${(mid + h).toFixed(1)}`;
  }
  return d;
}

function Handle({ x, y, r = 3 }: { x: number; y: number; r?: number }) {
  return <circle cx={x} cy={y} r={r + 1} fill="#000" stroke="#fff" strokeWidth="2" />;
}

function Waveform() {
  return (
    <WavePanel>
      <TimeRuler>
        {[0, 2, 4, 6, 8, 10, 12, 14].map((t) => (
          <TimeMark key={t}>{`0:${String(t).padStart(2, "0")}:00`}</TimeMark>
        ))}
      </TimeRuler>
      <Canvas height={126} role="img" aria-label="Sample waveform">
        <defs>
          <linearGradient id="sky" x1="0" y1="0" x2="0" y2="1">
            <stop offset="0" stopColor="#d2dae2" />
            <stop offset=".4" stopColor="#bdcad4" />
            <stop offset=".55" stopColor="#c8d2db" />
            <stop offset="1" stopColor="#dfe4e8" />
          </linearGradient>
        </defs>
        <rect y="15" width="100%" height="111" fill="url(#sky)" />
        <rect y="15" width="44" height="111" fill="#8db6df" opacity=".38" />
        {[42, 97].map((mid, lane) => (
          <g key={mid}>
            <path d={wavePath(lane, mid, 1, 44)} fill="#697885" />
            <path d={wavePath(lane, mid, 45, 828)} fill="#b8babc" />
            <line x1="828" x2="100%" y1={mid} y2={mid} stroke="#a9acaf" strokeWidth="2" />
          </g>
        ))}
        <line x1="44" x2="100%" y1="70.500" y2="70.500" stroke="#5b6166" strokeDasharray="3 2" />
        <path d="M0 15.500H44V126M.5 15V126M0 70.500H44" fill="none" stroke="#6fa9dd" />
        <path d="M.5 0V15M44 0V15" stroke="#fff" />
        <Handle x={0} y={6} r={4} />
        <Handle x={44} y={6} r={4} />
        {[20, 75].map((y) => (
          <g key={y}>
            <Handle x={0} y={y} />
            <Handle x={22} y={y} />
            <Handle x={44} y={y} />
            <Handle x={44} y={y + 45} />
          </g>
        ))}
      </Canvas>
      <WaveTag $row={0}>AMP ENVELOPE</WaveTag>
      <WaveTag $row={1}>FREE ENVELOPE</WaveTag>
      <Overview>
        <Canvas height={20} role="img" aria-label="Sample overview">
          <rect y="1" width="100%" height="18" fill="#484c4c" />
          {[5, 15].map((y) => (
            <g key={y}>
              <line x1="2" x2="100%" y1={y} y2={y} stroke="#929696" strokeWidth="2" />
              <path d={overviewPath(y, y * 9)} stroke="#cfd3d3" strokeWidth="1" />
            </g>
          ))}
          <path d="M.5 0V20" stroke="#fff" />
          <circle cx="0" cy="10" r="4" fill="#000" stroke="#fff" strokeWidth="2" />
          <svg x="100%" overflow="visible">
            <path d="M-1 0V20" stroke="#fff" strokeWidth="2" />
            <circle cx="0" cy="10" r="4" fill="#000" stroke="#fff" strokeWidth="2" />
          </svg>
        </Canvas>
        <OverviewTools>
          <b>A</b>
          <b>F</b>
          <svg width="12" height="8" viewBox="0 0 12 8" stroke={c.blue} fill="none" aria-hidden="true"><path d="M0 4h3M9 4h3M4.500 4h3M4.500 .5v7M7.500 .5v7M2.500 2.500v3M9.500 2.500v3" /></svg>
          <svg width="13" height="7" viewBox="0 0 13 7" stroke="currentColor" fill="none" aria-hidden="true"><path d="M.5 0v7M12.500 0v7M6.500 1v5M1 3.500h11" /><path d="M5 1L1.500 3.500L5 6zM8 1l3.500 2.500L8 6z" fill="currentColor" stroke="none" /></svg>
          <svg width="12" height="7" viewBox="0 0 12 7" stroke="currentColor" fill="none" aria-hidden="true"><path d="M.5 0v7M1 3.500h11" /><path d="M5 1L1.500 3.500L5 6z" fill="currentColor" stroke="none" /></svg>
          <svg width="12" height="7" viewBox="0 0 12 7" stroke="currentColor" fill="none" aria-hidden="true"><path d="M11.500 0v7M0 3.500h11" /><path d="M7 1l3.500 2.500L7 6z" fill="currentColor" stroke="none" /></svg>
          <svg width="8" height="8" viewBox="0 0 8 8" stroke="currentColor" strokeWidth="2" aria-hidden="true"><path d="M0 4h8" /></svg>
          <svg width="8" height="8" viewBox="0 0 8 8" stroke="currentColor" strokeWidth="2" aria-hidden="true"><path d="M0 4h8M4 0v8" /></svg>
        </OverviewTools>
      </Overview>
    </WavePanel>
  );
}

/* ---------- parameter sections ---------- */

const Sections = styled.div`
  display: flex;
  gap: 6px;
  margin-top: 3px;
`;

const SectionBox = styled.div<{ $w: number }>`
  position: relative;
  flex: 0 0 ${(p) => p.$w + 1}px;
  min-width: 0;
  padding-right: 1px;
  &::after {
    content: "";
    position: absolute;
    right: 0;
    top: 0;
    bottom: 10px;
    width: 1px;
    background: #d3d7d9;
  }
  h2 {
    margin: 0;
    height: 20px;
    background: ${c.button};
    font-size: 12px;
    font-weight: normal;
    line-height: 20px;
    text-align: center;
    white-space: nowrap;
  }
`;

const SectionBody = styled.div<{ $pad?: string }>`
  position: relative;
  padding: ${(p) => p.$pad ?? "6px 5px 0 0"};
  display: flex;
  flex-direction: column;
  gap: 2px;
`;

const Field = styled.div`
  height: 39px;
  display: flex;
  flex-direction: column;
  align-items: center;
`;

const Pair = styled.div<{ $cols: string; $gap?: number }>`
  display: grid;
  grid-template-columns: ${(p) => p.$cols};
  justify-items: center;
  column-gap: ${(p) => p.$gap ?? 0}px;
  row-gap: 2px;
`;

const Stack = styled.div<{ $gap?: number; $start?: boolean }>`
  display: flex;
  flex-direction: column;
  align-items: ${(p) => (p.$start ? "flex-start" : "center")};
  gap: ${(p) => p.$gap ?? 2}px;
`;

const KnobBlock = styled.div`
  display: flex;
  flex-direction: column;
  gap: 2px;
  padding-bottom: 2px;
`;

const Links = styled.svg`
  position: absolute;
  left: 0;
  top: 0;
  pointer-events: none;
`;

const BigSlot = styled.div`
  height: 98px;
`;

const AmountSlot = styled.div`
  height: 78px;
  padding-top: 10px;
`;

const EnvBody = styled.div`
  display: grid;
  grid-template-columns: repeat(5, 20px) 1fr;
  padding: 5px 0 0 5px;
`;

const FaderCell = styled.label`
  display: flex;
  flex-direction: column;
  font-size: 10px;
  color: ${c.muted};
`;

const FaderRow = styled.span`
  display: flex;
  height: 133px;
`;

const Fader = styled.input`
  appearance: none;
  writing-mode: vertical-lr;
  direction: rtl;
  width: 12px;
  height: 133px;
  margin: 0;
  background: linear-gradient(to top, #484c4d var(--level), ${c.ring} var(--level));
  &::-webkit-slider-thumb {
    appearance: none;
    width: 12px;
    height: 12px;
    border-radius: 50%;
    background: #1b1f20;
    border: 2px solid #fff;
    box-shadow: 0 0 0 1px rgba(255, 255, 255, 0.6);
  }
`;

const FaderSide = styled.span<{ $wide?: boolean }>`
  position: relative;
  width: 4px;
  background: #d2d6d7;
  &::after {
    content: "";
    position: absolute;
    left: ${(p) => (p.$wide ? -12 : 0)}px;
    right: 0;
    top: var(--mark);
    height: 3px;
    background: ${c.tick};
  }
`;

const FaderName = styled.span`
  width: 16px;
  text-align: center;
  line-height: 16px;
`;

const EnvKnobs = styled.div`
  display: flex;
  flex-direction: column;
  align-items: center;
  padding-top: 1px;
  gap: 2px;
`;

function Section({ title, w, children }: { title: string; w: number; children: React.ReactNode }) {
  return (
    <SectionBox $w={w}>
      <h2>{title}</h2>
      {children}
    </SectionBox>
  );
}

function Envelope({ title, values, marks, knobTick }: { title: string; values: number[]; marks: number[]; knobTick: number }) {
  return (
    <Section title={title} w={149}>
      <EnvBody>
        {["A", "D", "H", "S", "R"].map((n, i) => (
          <FaderCell key={n}>
            <FaderRow>
              <Fader
                type="range"
                defaultValue={values[i]}
                style={{ "--level": `${6 + (values[i] * 121) / 100}px` } as React.CSSProperties}
              />
              <FaderSide $wide={knobTick !== 0 && (n === "H" || n === "S")} style={{ "--mark": `${marks[i]}px` } as React.CSSProperties} />
            </FaderRow>
            <FaderName>{n}</FaderName>
          </FaderCell>
        ))}
        <EnvKnobs>
          <Knob label="A-C" dot={0} tick={knobTick} />
          <Knob label="D-C" dot={0} tick={knobTick} />
          <Knob label="R-C" dot={0} tick={knobTick} />
        </EnvKnobs>
      </EnvBody>
    </Section>
  );
}

function Parameters() {
  return (
    <Sections>
      <Section title="SETUP" w={95}>
        <SectionBody $pad="6px 4px 0 0">
          <Field><Picker label="Playback" value="One shot" /><Caption>Playback</Caption></Field>
          <Field><Picker label="Choke" value="Self" /><Caption>Choke</Caption></Field>
          <Field><LightButton $on>Track Pitch</LightButton><Caption>Env Mode</Caption></Field>
        </SectionBody>
      </Section>
      <Section title="MIX" w={54}>
        <SectionBody $pad="6px 5px 0 3px">
          <KnobBlock>
            <Knob label="Gain" dot={90} tick={90} fill={90} />
            <Knob label="Pan" dot={0} tick={0} />
          </KnobBlock>
          <LightButton>Vintage</LightButton>
          <Cluster>
            <LightButton $w={22} aria-label="Reverse">
              <svg width="14" height="14" viewBox="0 0 14 14" fill="none" stroke={c.ink} strokeWidth="2" aria-hidden="true">
                <circle cx="7" cy="7" r="5" /><path d="M9 4.500v5L4.500 7z" fill={c.ink} stroke="none" />
              </svg>
            </LightButton>
            <LightButton $w={22} aria-label="Invert phase">
              <svg width="14" height="14" viewBox="0 0 14 14" fill="none" stroke={c.ink} strokeWidth="2" aria-hidden="true">
                <circle cx="7" cy="7" r="5" /><path d="M1 13L13 1" />
              </svg>
            </LightButton>
          </Cluster>
        </SectionBody>
      </Section>
      <Section title="TUNING" w={99}>
        <SectionBody $pad="6px 0 0">
          <Links width="99" height="110" aria-hidden="true">
            <path d="M34 62L24 105M66 62L76 105" stroke="#c3c6c8" strokeWidth="2" />
          </Links>
          <BigSlot><Knob label="Tune" kind="big" dot={0} tick={0} /></BigSlot>
          <Pair $cols="48px 52px">
            <Knob label="Octave" dot={0} tick={0} />
            <Knob label="Fine" dot={0} tick={0} />
          </Pair>
        </SectionBody>
      </Section>
      <Section title="FILTER" w={114}>
        <SectionBody>
          <Links width="114" height="80" aria-hidden="true">
            <path d="M55 21L75 17M54 52L75 68" stroke="#c3c6c8" strokeWidth="2" />
          </Links>
          <Pair $cols="70px 36px" $gap={3}>
            <Stack $gap={4} $start>
              <Knob label="Cutoff" kind="big" off />
              <LightButton $w={70}>Active</LightButton>
            </Stack>
            <Stack><Knob label="Drive" off /><Knob label="Res" off /></Stack>
          </Pair>
          <Picker label="Filter type" value="SVF" dim />
          <Picker label="Filter mode" value="LPF 2 pole" dim />
        </SectionBody>
      </Section>
      <Section title="PLAY" w={59}>
        <SectionBody $pad="6px 0 0">
          <Knob label="Pre delay" dot={-159} tick={-155} />
          <Knob label="Start Offset" dot={0} tick={0} />
          <Knob label="End Offset" dot={0} tick={0} />
        </SectionBody>
      </Section>
      <Section title="LOOPING" w={114}>
        <SectionBody>
          <KnobBlock>
            <Pair $cols="52px 62px">
              <Knob label="Start Offset" off />
              <Knob label="End Offset" off />
              <Knob label="X-Fade" off />
              <Knob label="Curve" off />
            </Pair>
          </KnobBlock>
          <LightButton>Release</LightButton>
          <LightButton>Alternate</LightButton>
        </SectionBody>
      </Section>
      <Section title="TS" w={49}>
        <SectionBody>
          <LightButton>Active</LightButton>
          <AmountSlot><Knob label="Amount" dot={0} tick={-155} /></AmountSlot>
          <LightButton>Fast</LightButton>
          <LightButton>Track</LightButton>
        </SectionBody>
      </Section>
      <Envelope title="AMP ENVELOPE" values={[11, 3, 33, 100, 1]} marks={[114, 124, 87, 6, 127]} knobTick={0} />
      <Envelope title="FREE ENVELOPE" values={[0, 3, 33, 100, 1]} marks={[127, 127, 127, 127, 127]} knobTick={-155} />
    </Sections>
  );
}

const EditorScroll = styled.div`
  margin-top: auto;
  padding: 0 2px;
`;

/* ---------- modulation bar ---------- */

const ModBar = styled.footer`
  height: 38px;
  display: flex;
  justify-content: space-between;
  padding: 0 7px 0 2px;
`;

const ModButtons = styled.div`
  display: flex;
  gap: 2px;
  padding-top: 10px;
  button:first-child {
    margin-right: 3px;
  }
`;

const Macros = styled.div`
  display: grid;
  grid-template-columns: repeat(4, 45px);
  padding-top: 4px;
`;

const modSources = [
  "Src", "A-En", "F-En", "Vel", "Rnd",
  ...Array.from({ length: 16 }, (_, i) => `S ${i + 1}`),
  "M 1", "M 2", "M 3", "M 4", "Mod", "Pch", "Pres", "Tprt",
];

/* ---------- header pieces ---------- */

function Arc({ flip, dot, color = "currentColor" }: { flip?: boolean; dot?: boolean; color?: string }) {
  return (
    <svg width="16" height="16" viewBox="0 0 16 16" fill="none" stroke={color} strokeWidth="2.200" aria-hidden="true">
      <g transform={flip ? "translate(16 0) scale(-1 1)" : undefined}>
        <path d="M6 3.500H9A4.900 4.900 0 1 1 3.500 10" />
        <path d="M7 0L2.500 3.500L7 7z" fill={color} stroke="none" />
      </g>
      {dot && <circle cx="8.500" cy="8.500" r="1" />}
    </svg>
  );
}

function TopBar() {
  return (
    <Header>
      <Brand>
        <svg width="50" height="50" viewBox="0 0 50 50" aria-hidden="true">
          <rect x="1.500" y="1.500" width="47" height="47" fill="none" stroke="#8aa3b9" strokeWidth="3" />
          <path d="M7 7h17v25L7 43zM26 7h17v15L26 31z" fill="#8aa3b9" />
        </svg>
        <MasterFader>
          <svg width="14" height="50" viewBox="0 0 14 50" aria-hidden="true">
            <rect x="5" width="4" height="10" fill="#b9babb" />
            <rect x="5" y="16" width="4" height="34" fill="#484c4c" />
            <circle cx="7" cy="13" r="4.800" fill={c.shell} stroke="#fff" strokeWidth="2.400" />
          </svg>
        </MasterFader>
        <MenuArea>
          <MenuRow>
            {["File", "Tools", "Help"].map((m) => <MenuButton key={m}>{m} <Down /></MenuButton>)}
          </MenuRow>
          <InfoBox>
            <span>PRESET:<b>sample8</b></span>
            <svg width="9" height="9" viewBox="0 0 9 9" fill="none" stroke="#7a7f7f" aria-hidden="true"><path d="M4.500 .8L8.500 8.500H.5zM4.500 3.500v3" /></svg>
            <span>128.00</span>
            <span>KIT:</span>
            <svg width="9" height="9" viewBox="0 0 9 9" fill="none" stroke="#7a7f7f" strokeDasharray="2 1" aria-hidden="true"><circle cx="4.500" cy="4.500" r="3.800" /></svg>
            <span>17.2MB</span>
          </InfoBox>
        </MenuArea>
      </Brand>
      <Engines>
        {[1, 2, 3, 4, 5, 6, 7, 8].map((n) => (
          <Engine key={n}>
            <EngineDot $low={n === 1} />
            <EngineRing $on={n === 1}>{n}</EngineRing>
            <EngineSide>
              <MiniRound $tone="#5a7896">M</MiniRound>
              <MiniRound $tone={c.blue} aria-label={`Engine ${n} power`}>
                <svg width="10" height="10" viewBox="0 0 10 10" fill="none" stroke={c.ink} strokeWidth="1.200" aria-hidden="true">
                  <path d="M3.200 2.300A3.500 3.500 0 1 0 6.800 2.300M5 .8v4.200" />
                </svg>
              </MiniRound>
              <MiniRound $tone={n === 1 ? "#e8d32f" : "#5a7896"}>S</MiniRound>
            </EngineSide>
          </Engine>
        ))}
      </Engines>
      <Transport>
        <TransportRow>
          <Cluster>
            <DarkButton $w={36} $h={24} $tone={c.blue} aria-label="Play"><Triangle dir="right" w={12} h={12} /></DarkButton>
            <DarkButton $w={36} $h={24} $tone={c.maroon} aria-label="Record">
              <svg width="12" height="12" aria-hidden="true"><circle cx="6" cy="6" r="6" fill="#2c2f33" /></svg>
            </DarkButton>
            <DarkButton $w={36} $h={24} $tone={c.maroon} aria-label="Retrospective record"><Arc dot color="#33292f" /></DarkButton>
          </Cluster>
          <DarkButton $w={50} $h={24}>Song</DarkButton>
          <Cluster $gap={1}>
            <DarkButton $w={31} $h={24} aria-label="Undo"><Arc /></DarkButton>
            <DarkButton $w={17} $h={24} aria-label="Undo history"><Down size={7} /></DarkButton>
          </Cluster>
          <Cluster $pull><DarkButton $w={24} $h={24} aria-label="Settings"><Gear /></DarkButton></Cluster>
        </TransportRow>
        <TransportRow>
          <Cluster>
            <DarkButton $w={36} $h={24} aria-label="Metronome">
              <svg width="14" height="14" viewBox="0 0 14 14" fill="none" stroke="currentColor" strokeWidth="1.200" aria-hidden="true">
                <path d="M1.500 12.500L5 1.500h4l2.500 11zM6 10L12 1.500" /><path d="M2 9.500h9l1 3.500H1z" fill="currentColor" stroke="none" />
              </svg>
            </DarkButton>
            <DarkButton $w={36} $h={24}>Q</DarkButton>
            <DarkButton $w={36} $h={24} aria-label="MIDI">
              <svg width="12" height="12" viewBox="0 0 12 12" fill="none" stroke="currentColor" strokeWidth="1.200" aria-hidden="true">
                <circle cx="6" cy="6" r="5.300" /><circle cx="6" cy="6" r="3" strokeDasharray="1.200 1.800" />
              </svg>
            </DarkButton>
          </Cluster>
          <Cluster>
            <DarkButton $w={24} $h={24} $dim aria-label="Loop">
              <svg width="14" height="12" viewBox="0 0 14 12" fill="none" stroke="currentColor" strokeWidth="2" aria-hidden="true">
                <path d="M4 8Q2 8 2 6V4Q2 2 4 2H10Q12 2 12 4V6Q12 8 10 8H8" /><path d="M9 4.500v7L4.500 8z" fill="currentColor" stroke="none" />
              </svg>
            </DarkButton>
            <DarkButton $w={24} $h={24} $dim aria-label="Return to start">
              <svg width="12" height="10" viewBox="0 0 12 10" fill="none" stroke="currentColor" aria-hidden="true">
                <path d="M1.200 0v10" strokeWidth="2" /><path d="M11 1.500L4.500 5L11 8.500z" strokeWidth="1.600" />
              </svg>
            </DarkButton>
          </Cluster>
          <Cluster $gap={1}>
            <DarkButton $w={31} $h={24} $dim aria-label="Redo"><Arc flip /></DarkButton>
            <DarkButton $w={17} $h={24} $dim aria-label="Redo history"><Down size={7} /></DarkButton>
          </Cluster>
          <Cluster $pull>
            <DarkButton $w={24} $h={24} aria-label="Panic">
              <svg width="12" height="12" viewBox="0 0 12 12" fill="none" stroke="currentColor" strokeWidth="1.200" aria-hidden="true">
                <path d="M6 1L11.300 11H.7zM6 4.500v3.200M6 8.600v1.200" />
              </svg>
            </DarkButton>
          </Cluster>
        </TransportRow>
      </Transport>
    </Header>
  );
}

function Dots({ vertical, size }: { vertical?: boolean; size: number }) {
  return (
    <Grip $vertical={vertical} $size={size}>
      {Array.from({ length: 7 }, (_, i) => <i key={i} />)}
    </Grip>
  );
}

export default function App() {
  return (
    <Window>
      <GlobalStyle />
      <TitleBar>
        <Lights>
          <Light $color="#fc5b57" aria-label="Close" />
          <Light $color="#fdbe40" aria-label="Minimise" />
          <Light $color="#34c84a" aria-label="Zoom" />
        </Lights>
        Geist - sample8 *
      </TitleBar>
      <TopBar />
      <Body>
        <LeftColumn>
          <Browser />
          <Dots size={11} />
          <Pads />
        </LeftColumn>
        <Dots vertical size={8} />
        <RightColumn>
          <Pattern />
          <Dots size={8} />
          <Lower>
            <LayerColumn>
              <PadInfo>
                P1 Am synth 128
                <Meter $h={14} $fill="linear-gradient(#484c4c 44%, #2c3031 44%, #2c3031 56%, #484c4c 56%)" />
                <SmallButtons>
                  <LightButton $w={18} $h={18}>M</LightButton>
                  <LightButton $w={18} $h={18}>S</LightButton>
                  <LightButton $w={36} $h={18}>Pad</LightButton>
                  <LightButton $w={36} $h={18} $on>Layer</LightButton>
                </SmallButtons>
              </PadInfo>
              <PadOptions>Pad options... <Triangle dir="right" /></PadOptions>
              <ActiveLayer>
                Am synth 128
                <SmallButtons>
                  <LightButton $w={18} $h={14}>M</LightButton>
                  <LightButton $w={18} $h={14}>S</LightButton>
                  <Meter $w={72} $h={14} $fill="#22272a" />
                </SmallButtons>
              </ActiveLayer>
              {Array.from({ length: 7 }, (_, i) => <EmptyLayer key={i}>Empty Layer</EmptyLayer>)}
            </LayerColumn>
            <EditorPanel>
              <Waveform />
              <Parameters />
              <EditorScroll><ScrollThumb $w="100%" $h="8px" /></EditorScroll>
            </EditorPanel>
          </Lower>
        </RightColumn>
      </Body>
      <ModBar>
        <ModButtons>
          {modSources.map((m, i) => (
            <DarkButton key={m} $w={40} $square $tone={i === 0 ? c.blue : undefined}>{m}</DarkButton>
          ))}
        </ModButtons>
        <Macros>
          {[1, 2, 3, 4].map((n) => <Knob key={n} label={`Macro ${n}`} kind="tiny" dark />)}
        </Macros>
      </ModBar>
    </Window>
  );
}
